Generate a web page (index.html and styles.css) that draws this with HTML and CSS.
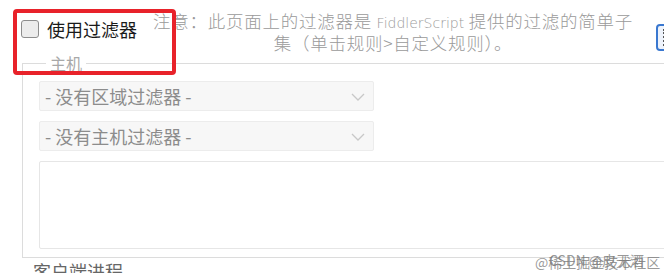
FILE: index.html
```html
<!DOCTYPE html>
<html lang="zh-CN">
<head>
<meta charset="utf-8">
<title>Filters</title>
<link rel="stylesheet" href="styles.css">
</head>
<body>
<div class="page">
  <div class="header">
    <label class="use-filter"><span class="cb"></span><span class="cb-text">使用过滤器</span></label>
    <p class="note">注意：此页面上的过滤器是 <span class="latin">FiddlerScript</span> 提供的过滤的简单子<br>集（单击规则&gt;自定义规则）。</p>
    <span class="side-btn"><span class="dots"></span></span>
  </div>
  <fieldset class="group">
    <legend>主机</legend>
    <div class="select"><span>- 没有区域过滤器 -</span><svg class="chev" width="14" height="8" viewBox="0 0 14 8"><path d="M1 1 L7 7 L13 1" fill="none" stroke="#c8c8c8" stroke-width="1.3"/></svg></div>
    <div class="select"><span>- 没有主机过滤器 -</span><svg class="chev" width="14" height="8" viewBox="0 0 14 8"><path d="M1 1 L7 7 L13 1" fill="none" stroke="#c8c8c8" stroke-width="1.3"/></svg></div>
    <div class="textbox"></div>
  </fieldset>
  <div class="section-title">客户端进程</div>
  <div class="annot"></div>
  <div class="watermark"><span class="wm1">@稀土掘金技术社区</span><span class="wm2">CSDN @皮无酒</span></div>
</div>
</body>
</html>
```
FILE: styles.css
```css
html, body {
  margin: 0;
  padding: 0;
  background: #ffffff;
  overflow: hidden;
}
.page {
  position: relative;
  width: 664px;
  height: 273px;
  overflow: hidden;
  font-family: "Noto Sans CJK SC", "Liberation Sans", sans-serif;
}
.header {
  display: flex;
  align-items: flex-start;
  height: 54px;
}
.use-filter {
  display: flex;
  align-items: center;
  gap: 8px;
  margin: 19px 0 0 21px;
  flex: none;
}
.cb {
  width: 16px;
  height: 16px;
  border: 1px solid #8d8d8d;
  border-radius: 3px;
  background: #ececec;
}
.cb-text {
  font-size: 18px;
  line-height: 20px;
  color: #1a1a1a;
}
.note {
  margin: 11px 0 0 10px;
  width: 492px;
  flex: none;
  font-size: 17.5px;
  line-height: 19px;
  letter-spacing: 0.75px;
  color: #9a9a9a;
  text-align: center;
  white-space: nowrap;
  font-weight: 300;
}
.latin {
  font-family: "DejaVu Sans", sans-serif;
  font-size: 14px;
  letter-spacing: 0;
}
.side-btn {
  margin: 24px 0 0 17px;
  width: 11px;
  height: 23px;
  border: 2px solid #3a78d0;
  border-radius: 4px;
  background: #eef3fb;
  display: flex;
  justify-content: center;
  flex: none;
}
.dots {
  width: 0;
  margin-top: 3px;
  height: 17px;
  border-left: 2px dotted #555;
}
.group {
  margin: 0 0 0 22px;
  padding: 9px 0 8px 16px;
  width: 700px;
  border: 1px solid #dcdcdc;
  display: flex;
  flex-direction: column;
  gap: 10px;
  box-sizing: border-box;
}
.group legend {
  margin-left: 7px;
  padding: 0 4px;
  font-size: 16px;
  line-height: 18px;
  color: #a8a8a8;
}
.select {
  width: 335px;
  height: 30px;
  box-sizing: border-box;
  border: 1px solid #ececec;
  border-radius: 2px;
  background: #f7f7f7;
  display: flex;
  align-items: center;
  justify-content: space-between;
  padding: 0 8px 0 5px;
  font-size: 18px;
  color: #8c8c8c;
}
.chev {
  margin-top: 2px;
}
.textbox {
  height: 86px;
  border: 1px solid #e6e6e6;
  border-radius: 2px;
  background: #ffffff;
}
.section-title {
  margin: 3px 0 0 33px;
  font-size: 18px;
  line-height: 20px;
  color: #666;
}
.annot {
  position: absolute;
  left: 13px;
  top: 9px;
  width: 155px;
  height: 58px;
  border: 4px solid #e8222a;
  border-radius: 4px;
}
.watermark {
  position: absolute;
  left: 535px;
  top: 252px;
  width: 130px;
  height: 20px;
  font-size: 14px;
  color: rgba(120, 120, 120, 0.75);
}
.wm1, .wm2 {
  position: absolute;
  top: 0;
  white-space: nowrap;
}
.wm1 { left: 0; }
.wm2 { left: 14px; top: -2px; }
```
